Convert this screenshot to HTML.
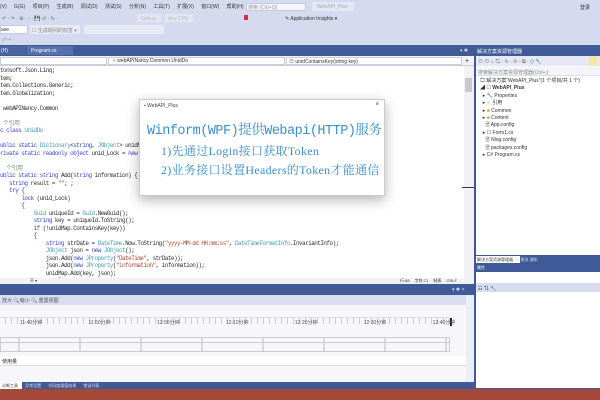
<!DOCTYPE html>
<html><head><meta charset="utf-8"><style>
*{margin:0;padding:0;box-sizing:border-box}
body{width:600px;height:400px;overflow:hidden;background:#d5daee;font-family:"Liberation Sans","Noto Sans CJK SC",sans-serif;position:relative}
.a{position:absolute}
.t{font-size:5px;color:#333;white-space:nowrap}
.code{position:absolute;left:0;font-family:"Liberation Mono","Noto Sans CJK SC",monospace;font-size:6px;letter-spacing:-0.55px;color:#333;white-space:pre;line-height:7.5px}
.k{color:#3a4bd0}.ty{color:#4aa0b8}.s{color:#a8503a}.c{color:#7a9a7a}.g{color:#999}
</style></head><body>
<!-- menu -->
<div class="a t" style="top:3px;left:0;word-spacing:6px">(V) G(G) 项目(P) 生成(B) 调试(D) 测试(S) 分析(N) 工具(T) 扩展(X) 窗口(W) 帮助(H)</div>
<div class="a" style="left:246px;top:3px;width:60px;height:8px;background:#f3f4fa;border:1px solid #c5cbe0"></div>
<div class="a t" style="left:248px;top:4px;color:#999">搜索 (Ctrl+Q)</div>
<div class="a" style="left:312px;top:2px;width:42px;height:9px;background:#e4e7f4"></div>
<div class="a t" style="left:317px;top:4px;color:#aab">WebAPI_Plus</div>
<div class="a t" style="left:580px;top:4px">登录</div>
<!-- toolbar -->
<div class="a t" style="left:2px;top:16px;color:#666">↶ · ↷ ·  ⚙ · ▫ ·  💾  ↺ · ↻ ·</div>
<div class="a" style="left:137px;top:14px;width:24px;height:8px;background:#e2e5f2"></div>
<div class="a" style="left:165px;top:14px;width:28px;height:8px;background:#e2e5f2"></div>
<div class="a t" style="left:141px;top:16px;color:#bbb">Debug</div>
<div class="a t" style="left:168px;top:16px;color:#bbb">Any CPU</div>
<div class="a" style="left:244px;top:15px;width:4px;height:5px;background:#c33"></div>
<div class="a t" style="left:285px;top:16px">✎ Application Insights ▾</div>
<div class="a" style="left:0;top:25px;width:28px;height:9px;background:#fff;border:1px solid #c5cbe0"></div>
<div class="a t" style="left:1px;top:27px">ase</div>
<div class="a" style="left:30px;top:25px;width:50px;height:9px;background:#e8eaf5"></div>
<div class="a t" style="left:32px;top:27px;color:#888">☐ 生成期间的标签 ▾</div>
<div class="a" style="left:84px;top:25px;width:80px;height:9px;background:#e8eaf5"></div>
<div class="a t" style="left:2px;top:37px;color:#888">⤺ ▾</div>
<!-- tab bar -->
<div class="a" style="left:0;top:45px;width:474px;height:11px;background:#3f5a96"></div>
<div class="a" style="left:0;top:46px;width:26px;height:9px;background:#4a64a0"></div>
<div class="a t" style="left:1px;top:48px;color:#fff">(H)</div>
<div class="a" style="left:27px;top:46px;width:46px;height:9px;background:#5570ac"></div>
<div class="a t" style="left:31px;top:48px;color:#fff">Program.cs</div>
<div class="a t" style="left:460px;top:48px;color:#dde">▾ ✱</div>
<!-- nav bar -->
<div class="a" style="left:0;top:56px;width:474px;height:10px;background:#f1f2f8;border-bottom:1px solid #ccd"></div>
<div class="a" style="left:0;top:57px;width:107px;height:8px;background:#fff;border:1px solid #ccd"></div>
<div class="a" style="left:108px;top:57px;width:177px;height:8px;background:#fff;border:1px solid #ccd"></div>
<div class="a t" style="left:111px;top:58px">🔸webAPINancy.Common.UnidDo</div>
<div class="a" style="left:286px;top:57px;width:176px;height:8px;background:#fff;border:1px solid #ccd"></div>
<div class="a t" style="left:289px;top:58px">⊙ unidContainsKey(string key)</div>
<div class="a t" style="left:465px;top:58px;font-size:7px">+</div>
<!-- editor -->
<div class="a" style="left:0;top:66px;width:474px;height:214px;background:#fff;overflow:hidden">
<div class="code" style="top:1px">tonsoft.Json.Linq;
tem;
tem.Collections.Generic;
tem.Globalization;

 webAPINancy.Common

<span class="c"> 个引用</span>
<span class="k">c class</span> <span class="ty">UnidDo</span>

<span class="k">ublic static</span> <span class="ty">Dictionary</span>&lt;<span class="k">string</span>, <span class="ty">JObject</span>&gt; unidMap
<span class="k">rivate static readonly object</span> unid_Lock = <span class="k">new</span>

<span class="c">  个引用</span>
<span class="k">ublic static string</span> Add(<span class="k">string</span> information) {
   <span class="k">string</span> result = <span class="s">""</span>; ;
   <span class="k">try</span> {
       <span class="k">lock</span> (unid_Lock)
       {
           <span class="ty">Guid</span> uniqueId = <span class="ty">Guid</span>.NewGuid();
           <span class="k">string</span> key = uniqueId.ToString();
           <span class="k">if</span> (!unidMap.ContainsKey(key))
           {
               <span class="k">string</span> strDate = <span class="ty">DateTime</span>.Now.ToString(<span class="s">"yyyy-MM-dd HH:mm:ss"</span>, <span class="ty">DateTimeFormatInfo</span>.InvariantInfo);
               <span class="ty">JObject</span> json = <span class="k">new</span> <span class="ty">JObject</span>();
               json.Add(<span class="k">new</span> <span class="ty">JProperty</span>(<span class="s">"DateTime"</span>, strDate));
               json.Add(<span class="k">new</span> <span class="ty">JProperty</span>(<span class="s">"information"</span>, information));
               unidMap.Add(key, json);
               result = key;</div>
<div class="a" style="left:464px;top:0;width:10px;height:214px;background:#f2f2f5"></div>
<div class="a" style="left:465px;top:12px;width:7px;height:14px;background:#c8c8cc"></div>
<div class="a" style="left:462px;top:121px;width:12px;height:1px;background:#334"></div>
</div>
<!-- status line -->
<div class="a" style="left:0;top:278px;width:474px;height:6px;background:#f1f2f8"></div>
<div class="a t" style="left:30px;top:278px;font-size:4px">不 ▾</div>
<div class="a t" style="left:400px;top:278px;font-size:4px;word-spacing:4px">行:88 字符:71 制表 CRLF</div>
<!-- bottom panel -->
<div class="a" style="left:0;top:284px;width:474px;height:11px;background:#3f5a96"></div>
<div class="a t" style="left:452px;top:287px;color:#dde">▾ ✱ ×</div>
<div class="a" style="left:0;top:295px;width:466px;height:10px;background:#d8ddf0"></div>
<div class="a t" style="left:2px;top:297px;color:#555">放大 🔍缩小 🔍 重置视图</div>
<div class="a" style="left:0;top:305px;width:466px;height:83px;background:#f7f7fa"></div>
<div class="a" style="left:0;top:317px;width:450px;height:7px;border-top:1px solid #ddd;background:repeating-linear-gradient(90deg,transparent 0 5px,#ccc 5px 6px)"></div>
<div class="a" style="left:450px;top:318px;width:2px;height:8px;background:#222"></div>
<div class="a" style="left:0;top:337px;width:450px;height:15px;border:1px solid #ccc;background:repeating-linear-gradient(90deg,transparent 0 17.5px,#bbb 17.5px 18.5px,transparent 18.5px 61px)"></div>
<div class="a" style="left:0;top:342px;width:450px;height:1px;background:#ccc"></div>
<div class="a t" style="left:20px;top:319px;word-spacing:45px;color:#555">11:40分钟 11:50分钟 12:00分钟 12:10分钟 12:20分钟 12:30分钟 12:40分钟</div>
<div class="a" style="left:0;top:356px;width:466px;height:10px;background:#fff;border-bottom:1px solid #ddd"></div>
<div class="a t" style="left:2px;top:358px">使用量</div>
<div class="a" style="left:466px;top:295px;width:8px;height:93px;background:#eceef6"></div>
<div class="a" style="left:0;top:382px;width:474px;height:7px;background:#3f5a96"></div>
<div class="a" style="left:0;top:382px;width:22px;height:7px;background:#fff"></div>
<div class="a t" style="left:2px;top:383px;font-size:4px;word-spacing:6px">诊断工具 <span style="color:#dde">异常设置 代码度量值结果 错误列表</span></div>
<!-- right panel -->
<div class="a" style="left:474px;top:45px;width:126px;height:344px;background:#3f5a96"></div>
<div class="a t" style="left:477px;top:48px;color:#fff">解决方案资源管理器</div>
<div class="a" style="left:476px;top:56px;width:124px;height:199px;background:#fff"></div>
<div class="a" style="left:476px;top:56px;width:124px;height:10px;background:#e6e9f5"></div>
<div class="a t" style="left:478px;top:58px;color:#667">⊙ ⊙ ⌂ ⇆ · ↻ · ⟳ ▫ ⧉ · ⟨⟩ 🔧</div>
<div class="a" style="left:589px;top:57px;width:8px;height:8px;background:#f7e59a"></div>
<div class="a" style="left:476px;top:67px;width:124px;height:9px;background:#f4f5fa;border-bottom:1px solid #dde"></div>
<div class="a t" style="left:478px;top:69px;color:#888">搜索解决方案资源管理器(Ctrl+;)</div>
<div class="a t" style="left:480px;top:78px;line-height:7.4px">🖵 解决方案"WebAPI_Plus"(1 个项目/共 1 个)<br>◢ ☐ <b>WebAPI_Plus</b><br>&nbsp;&nbsp;▸ 🔧 Properties<br>&nbsp;&nbsp;▸ ⁘ 引用<br>&nbsp;&nbsp;▸ <span style="color:#d9a441">■</span> Common<br>&nbsp;&nbsp;▸ <span style="color:#d9a441">■</span> Content<br>&nbsp;&nbsp;&nbsp;&nbsp;🗎 App.config<br>&nbsp;&nbsp;▸ ☐ Form1.cs<br>&nbsp;&nbsp;&nbsp;&nbsp;🗎 Nlog.config<br>&nbsp;&nbsp;&nbsp;&nbsp;🗎 packages.config<br>&nbsp;&nbsp;▸ C# Program.cs</div>
<div class="a" style="left:476px;top:256px;width:44px;height:7px;background:#fff"></div>
<div class="a t" style="left:477px;top:257px;font-size:4px">解决方案资源管理器 <span style="color:#dde">Git 更改 通知</span></div>
<div class="a t" style="left:477px;top:265px;color:#fff;font-size:4px">属性</div>
<div class="a" style="left:476px;top:272px;width:124px;height:116px;background:#fff"></div>
<div class="a" style="left:476px;top:283px;width:124px;height:9px;background:#d8ddf0"></div>
<div class="a t" style="left:478px;top:285px">☷ ⇅ 🔧</div>
<!-- red bottom -->
<div class="a" style="left:0;top:389px;width:600px;height:11px;background:#a4483a"></div>
<!-- popup -->
<div class="a" style="left:139px;top:99px;width:246px;height:97px;background:#fff;border:1px solid #ccc;box-shadow:0 4px 12px rgba(0,0,0,.3)">
<div class="a t" style="left:4px;top:3px;color:#444">▪ WebAPI_Plus</div>
<div class="a t" style="right:5px;top:2px;font-size:6px">×</div>
<div class="a" style="left:7px;top:18px;font-family:'Liberation Mono','Noto Serif CJK SC',monospace;font-size:13.5px;letter-spacing:-0.5px;color:#3d8fc9;white-space:nowrap">Winform(WPF)提供Webapi(HTTP)服务</div>
<div class="a" style="left:21px;top:42px;font-family:'Liberation Serif','Noto Serif CJK SC',serif;font-size:12px;letter-spacing:0.3px;color:#3d8fc9;white-space:nowrap">1)先通过Login接口获取Token</div>
<div class="a" style="left:21px;top:61px;font-family:'Liberation Serif','Noto Serif CJK SC',serif;font-size:12px;letter-spacing:0.3px;color:#3d8fc9;white-space:nowrap">2)业务接口设置Headers的Token才能通信</div>
</div>
</body></html>
